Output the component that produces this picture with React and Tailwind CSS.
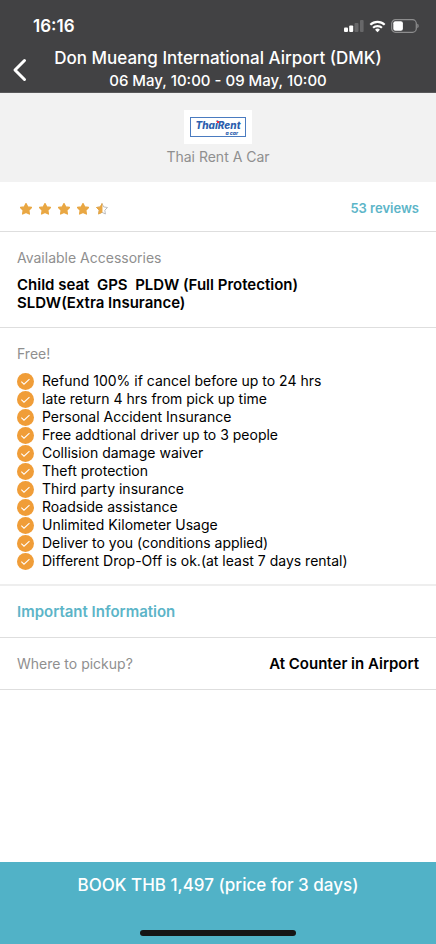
let freebies = [
  "Refund 100% if cancel before up to 24 hrs",
  "late return 4 hrs from pick up time",
  "Personal Accident Insurance",
  "Free addtional driver up to 3 people",
  "Collision damage waiver",
  "Theft protection",
  "Third party insurance",
  "Roadside assistance",
  "Unlimited Kilometer Usage",
  "Deliver to you (conditions applied)",
  "Different Drop-Off is ok.(at least 7 days rental)",
];

function StatusBar() {
  return (
    <div className="flex items-center justify-between pl-[33px] pr-[17px] pt-4 h-9">
      <span className="text-[17px] leading-5 font-semibold">16:16</span>
      <div className="flex items-center gap-[5px]">
        <svg className="w-5 h-3" viewBox="0 0 20 12" fill="#fff">
          <rect x="0" y="7.5" width="4" height="4.5" rx="1" />
          <rect x="5.2" y="5.5" width="4" height="6.5" rx="1" />
          <rect x="10.5" y="3" width="4" height="9" rx="1" opacity="0.2" />
          <rect x="16" y="0" width="3.6" height="12" rx="1" opacity="0.2" />
        </svg>
        <svg className="w-[17px] h-[13px]" viewBox="0 0 18 13" fill="none" stroke="#fff" strokeWidth="2.3">
          <path d="M1.4 4.7a11 11 0 0 1 15.2 0" />
          <path d="M4.3 7.9a6.8 6.8 0 0 1 9.4 0" />
          <path d="M9 12.6l-2.6-2.7a3.8 3.8 0 0 1 5.2 0z" fill="#fff" stroke="none" />
        </svg>
        <svg className="w-7 h-[14px]" viewBox="0 0 28 14">
          <rect x="0.7" y="0.7" width="24.6" height="12.6" rx="3.8" fill="none" stroke="#fff" strokeOpacity="0.4" strokeWidth="1.2" />
          <rect x="2.3" y="2.3" width="9.6" height="9.4" rx="2" fill="#fff" />
          <path d="M26.4 4.8c1.6.5 1.6 3.9 0 4.4z" fill="#fff" fillOpacity="0.45" />
        </svg>
      </div>
    </div>
  );
}

function Star({ half }) {
  let shape = "M6 .6l1.7 3.3 3.8.6-2.7 2.7.6 3.8L6 9.3 2.6 11l.6-3.8L.5 4.5l3.8-.6z";
  return (
    <svg className="w-3 h-3" viewBox="0 0 12 12">
      {half ? (
        <>
          <path d={shape} fill="#fff" stroke="#b5b5b5" strokeWidth="0.9" strokeLinejoin="round" />
          <path d="M6 .6v8.7L2.6 11l.6-3.8L.5 4.5l3.8-.6z" fill="#e9a743" stroke="#e9a743" strokeWidth="0.9" strokeLinejoin="round" />
        </>
      ) : (
        <path d={shape} fill="#e9a743" stroke="#e9a743" strokeWidth="1.3" strokeLinejoin="round" />
      )}
    </svg>
  );
}

function CheckIcon() {
  return (
    <svg className="w-[17px] h-[17px] shrink-0" viewBox="0 0 18 18">
      <circle cx="9" cy="9" r="9" fill="#f09d38" />
      <path d="M4.6 9.2l2.8 2.7 5.8-5.4" fill="none" stroke="#fff" strokeWidth="1.1" />
    </svg>
  );
}

function Logo() {
  return (
    <div className="w-[68px] h-[34px] bg-white p-[6px] pt-[7px]">
      <div className="h-5 pt-px border border-[#4a7bc0] text-[#2d5fae] italic font-extrabold text-center">
        <div className="relative text-[10px] leading-[12px]">
          ThaiRent
          <span className="absolute left-[26px] top-[2px] w-[2px] h-[2px] bg-red-500"></span>
        </div>
        <div className="text-[5px] leading-[5px] text-right pr-[7px]">a car</div>
      </div>
    </div>
  );
}

export default function App() {
  return (
    <div className="min-h-screen flex flex-col bg-white text-black font-['Inter',sans-serif]">
      <header className="bg-[#424244] text-white border-b border-[#59595b]">
        <StatusBar />
        <div className="grid grid-cols-[40px_1fr_40px] items-center pt-[11px]">
          <button aria-label="Back" className="pl-3">
            <svg className="w-4 h-6" viewBox="0 0 16 24" fill="none" stroke="#fff" strokeWidth="3" strokeLinecap="round" strokeLinejoin="round">
              <path d="M12.5 2.5L3 12l9.5 9.5" />
            </svg>
          </button>
          <div className="text-center whitespace-nowrap">
            <h1 className="text-[17px] leading-[22px] font-medium">Don Mueang International Airport (DMK)</h1>
            <p className="text-[15px] leading-[23px] font-medium">06 May, 10:00 - 09 May, 10:00</p>
          </div>
        </div>
      </header>

      <section className="bg-[#f2f2f2] flex flex-col items-center pt-[17px] pb-[15px]">
        <Logo />
        <h2 className="text-[14px] leading-5 text-[#8f8f8f] mt-[3px]">Thai Rent A Car</h2>
      </section>

      <section className="flex items-center justify-between h-[50px] pl-5 pr-[17px] border-b border-[#dedede]">
        <div className="flex gap-[7px] pt-1" role="img" aria-label="4.5 stars">
          <Star />
          <Star />
          <Star />
          <Star />
          <Star half />
        </div>
        <a href="#reviews" className="pt-1 text-[13px] font-semibold text-[#5cb5c8]">53 reviews</a>
      </section>

      <section className="px-[17px] pt-4 pb-[15px] border-b border-[#dedede]">
        <h3 className="text-[14px] leading-5 text-[#8f8f8f] mb-2">Available Accessories</h3>
        <p className="text-[15px] leading-[18px] font-semibold whitespace-pre-wrap">
          {"Child seat  GPS  PLDW (Full Protection)\nSLDW(Extra Insurance)"}
        </p>
      </section>

      <section className="px-[17px] pt-4 pb-[14px] border-b-2 border-[#eeeeee]">
        <h3 className="text-[14px] leading-5 text-[#8f8f8f] mb-2">Free!</h3>
        <ul>
          {freebies.map((item) => (
            <li key={item} className="flex items-center gap-2 text-[14px] leading-[18px]">
              <CheckIcon />
              {item}
            </li>
          ))}
        </ul>
      </section>

      <section className="flex items-center h-[52px] px-[17px] border-b border-[#dedede]">
        <a href="#information" className="text-[15px] leading-5 font-semibold text-[#5cb5c8]">Important Information</a>
      </section>

      <section className="flex items-center justify-between h-[52px] px-[17px] border-b border-[#dedede] leading-5">
        <span className="text-[14px] text-[#8f8f8f]">Where to pickup?</span>
        <span className="text-[15px] font-semibold">At Counter in Airport</span>
      </section>

      <button className="mt-auto bg-[#51b2c7] text-white flex flex-col items-center pt-[11px] pb-2">
        <span className="text-[17px] leading-6 font-medium">BOOK THB 1,497 (price for 3 days)</span>
        <span className="mt-[33px] w-[156px] h-[6px] rounded-full bg-[#151515]"></span>
      </button>
    </div>
  );
}
